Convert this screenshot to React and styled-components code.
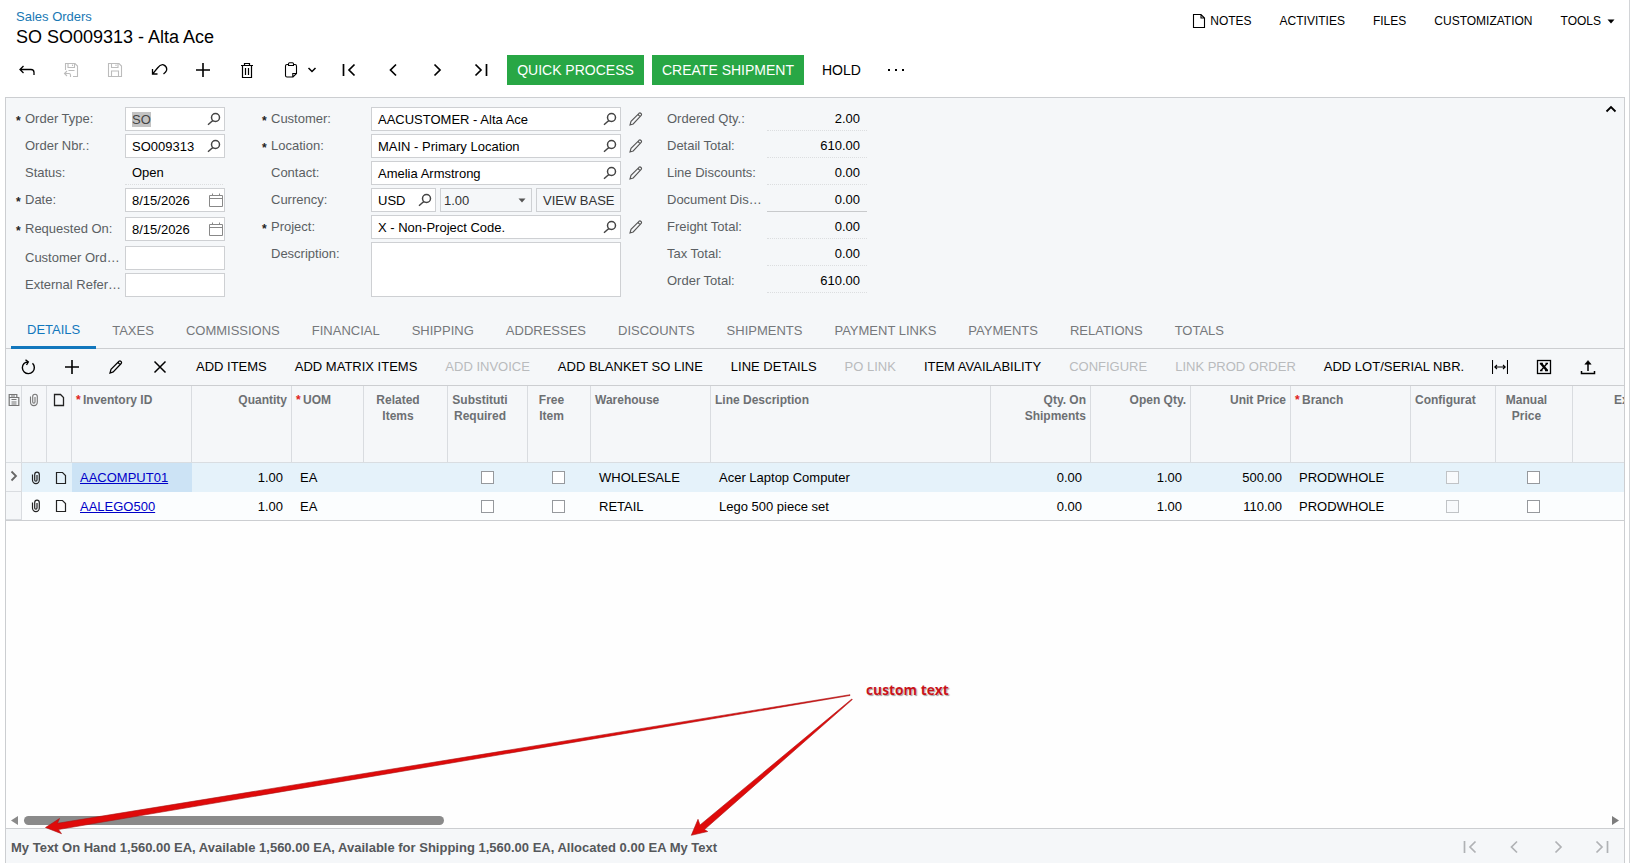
import React from 'react';
import styled, { createGlobalStyle } from 'styled-components';

const GlobalStyle = createGlobalStyle`
    * {
        box-sizing: border-box;
    }
    body {
        margin: 0;
        background: #fff;
        color: #000;
        font-family: "Liberation Sans", Arial, sans-serif;
        font-size: 13px;
        overflow: hidden;
    }
`

const Page = styled.div`
    position: relative;
    width: 1630px;
    height: 863px;
    display: flex;
    flex-direction: column;
    border-right: 1px solid #d2d4d7;
`

const Header = styled.header`
    height: 48px;
    flex: none;
    display: flex;
    justify-content: space-between;
    padding: 8px 14px 0 16px;
`

const Crumb = styled.div`
    color: #1878b4;
    line-height: 16px;
    padding-top: 1px;
`

const Title = styled.div`
    font-size: 18px;
    line-height: 22px;
    margin-top: 1px;
`

const Menu = styled.nav`
    display: flex;
    align-items: center;
    gap: 28px;
    height: 26px;
    font-size: 12px;
`

const MenuItem = styled.span`
    display: flex;
    align-items: center;
    gap: ${props => props.$gap || 0}px;
`

const ActionBar = styled.div`
    height: 49px;
    flex: none;
    display: flex;
    align-items: center;
    padding: 0 0 5px 5px;
`

const IconSlot = styled.span`
    width: ${props => props.$w || 44}px;
    height: 30px;
    flex: none;
    display: flex;
    align-items: center;
    justify-content: center;
    gap: 9px;
`

const CopySlot = styled(IconSlot)`
    width: 58px;
    padding-left: 4px;
`

const GreenButton = styled.button`
    width: ${props => props.$w}px;
    height: 30px;
    border: 0;
    padding: 0;
    margin: 0 4px;
    background: #28a745;
    color: #fff;
    font: 14px "Liberation Sans", Arial, sans-serif;
`

const TextButton = styled.span`
    padding: ${props => props.$size ? '0' : '0 0 2px'};
    margin: 0 14px;
    font-size: ${props => props.$size || 13}px;
    color: ${props => props.$off ? '#b9bbbd' : '#000'};
    white-space: nowrap;
`

const Panel = styled.main`
    width: 1620px;
    margin-left: 5px;
    flex: 1;
    min-height: 0;
    display: flex;
    flex-direction: column;
    border: 1px solid #ccced1;
    border-bottom: 0;
`

const Form = styled.section`
    height: 212px;
    flex: none;
    display: flex;
    padding: 9px 7px 0 9px;
    background: #f5f7f9;
`

const Column = styled.div`
    width: ${props => props.$w}px;
    flex: none;
`

const Row = styled.div`
    height: ${props => props.$h || 24}px;
    margin-bottom: ${props => props.$gap || 3}px;
    display: flex;
    gap: 4px;
`

const Label = styled.label`
    display: flex;
    align-items: center;
    width: 110px;
    height: 23px;
    margin-right: -4px;
    color: #5b5f63;
    white-space: nowrap;
`

const Star = styled.span`
    width: 10px;
    padding: 4px 0 0 1px;
    font-size: 12px;
    font-weight: bold;
    color: #222;
`

const Box = styled.div`
    display: flex;
    align-items: center;
    justify-content: space-between;
    width: ${props => props.$w || 100}px;
    height: ${props => props.$h || 24}px;
    flex: none;
    padding: 0 ${props => props.$end || 3}px 0 ${props => props.$pad || 6}px;
    border: 1px solid #ced0d3;
    background: ${props => props.$flat ? '#f5f7f9' : '#fff'};
    color: ${props => props.$flat ? '#333' : '#000'};
    white-space: nowrap;
`

const Selected = styled.span`
    background: #c3c3c3;
    color: #444;
    line-height: 15px;
`

const Value = styled.div`
    width: ${props => props.$left ? 98 : 100}px;
    height: 24px;
    padding: 0 7px;
    line-height: 24px;
    border-bottom: 1px ${props => props.$solid ? 'solid #c8cacc' : 'dotted #dcdee0'};
    text-align: ${props => props.$left ? 'left' : 'right'};
`

const PencilSlot = styled.span`
    display: flex;
    align-items: center;
    padding-left: 4px;
`

const Collapse = styled.span`
    margin: -2px 0 0 auto;
    line-height: 0;
`

const Tabs = styled.div`
    height: 39px;
    flex: none;
    display: flex;
    padding-left: 5px;
    background: #f5f7f9;
    border-bottom: 1px solid #ccced1;
`

const Tab = styled.span`
    height: 39px;
    padding: ${props => props.$on ? '1px 16px 0' : '2px 16px 0'};
    line-height: ${props => props.$on ? 37 : 38}px;
    color: ${props => props.$on ? '#1277bd' : '#75787b'};
    border-bottom: ${props => props.$on ? '3px solid #1277bd' : '0'};
`

const GridBar = styled.div`
    height: 37px;
    flex: none;
    display: flex;
    align-items: center;
    background: #f5f7f9;
    border-bottom: 1px solid #ccced1;
`

const GridLine = styled.div`
    display: grid;
    grid-template-columns: 16px 25px 25px 120px 100px 72px 84px 80px 63px 120px 280px 100px 100px 100px 120px 85px 77px 51px;
    flex: none;
`

const HeadLine = styled(GridLine)`
    height: 77px;
    background: #f5f7f9;
    border-bottom: 1px solid #d9dde1;
`

const HeadCell = styled.div`
    overflow: hidden;
    padding: 6px ${props => props.$align === 'center' ? 19 : props.$align === 'right' ? 4 : 0}px 0 4px;
    border-right: 1px solid #d9dce0;
    font-size: 12px;
    font-weight: bold;
    line-height: 16px;
    color: #6d7073;
    text-align: ${props => props.$align || 'left'};
    white-space: pre;
`

const ClippedHead = styled(HeadCell)`
    padding: 6px 0 0 41px;
    border-right: 0;
`

const HeadIcon = styled(HeadCell)`
    display: flex;
    align-items: flex-start;
    justify-content: center;
    padding: 7px 0 0;
`

const Required = styled.span`
    display: inline-block;
    width: 7px;
    color: #e02020;
`

const BodyLine = styled(GridLine)`
    height: 29px;
    background: ${props => props.$active ? '#e5f2fa' : '#fbfdfe'};
    border-bottom: ${props => props.$active ? '0' : '1px solid #ccced1'};
`

const Cell = styled.div`
    display: flex;
    align-items: center;
    justify-content: ${props => props.$align || 'flex-start'};
    padding: ${props => props.$align === 'center' ? '0 2px 0 0' : '0 9px 0 8px'};
    background: ${props => props.$picked ? '#cce3f5' : 'transparent'};
    white-space: nowrap;
`

const Marker = styled(Cell)`
    background: #f5f7f9;
    border-right: 1px solid #d9dce0;
    border-bottom: 1px solid #d9dce0;
    padding: 0 0 3px;
`

const IconCell = styled(Cell)`
    padding: 0 0 0 3px;
`

const ItemLink = styled.a`
    color: #0000c8;
    text-decoration: underline;
`

const Check = styled.span`
    width: 13px;
    height: 13px;
    border: 1px solid ${props => props.$off ? '#c0c3c6' : '#96999d'};
    background: ${props => props.$off ? '#f8fafc' : '#fff'};
`

const Blank = styled.div`
    flex: 1;
    background: #fefefe;
`

const ScrollBar = styled.div`
    height: 14px;
    flex: none;
    display: flex;
    align-items: flex-start;
    padding: 2px 5px 0;
    gap: 6px;
    background: #fefefe;
`

const Thumb = styled.div`
    width: 420px;
    height: 9px;
    margin-right: auto;
    border-radius: 5px;
    background: #8a8a8a;
`

const Footer = styled.footer`
    height: 35px;
    flex: none;
    display: flex;
    align-items: center;
    justify-content: space-between;
    padding: 2px 0 0 5px;
    border-top: 1px solid #ccced1;
    background: #f5f7f9;
    font-weight: bold;
    color: #55585b;
`

const Pager = styled.div`
    display: flex;
    color: #b0b2b5;
`

const Arrows = styled.svg`
    position: absolute;
    left: 0;
    top: 0;
    pointer-events: none;
`

const Note = styled.div`
    position: absolute;
    left: 866px;
    top: 680px;
    font: bold 13.8px/20px "Open Sans", sans-serif;
    color: #c8141a;
    white-space: nowrap;
    text-shadow: 0 0 1px #fff, 1px 1px 1px #999;
`

const shapes = {
    back: [16, 16, <path d="M4.500 4 1 7.500l3.500 3.500M1 7.500h11q3 0 3 3V13" />],
    saveClose: [16, 16, <path d="M2.500 8V1.500h9.500l2.500 2.500v10.500h-4.500M5 1.500v4h6.500v-4M9.500 2.500v1.500M5.500 8.500h6M4 9 1.500 11.500 4 14M1.500 11.500H6q1.500 0 1.500 1.500v2" />],
    save: [16, 16, <path d="M1.500 1.500h10.500l2.500 2.500v10.500h-13zM4.500 1.500v4h6.500v-4M9 2.500v1.500M4.500 14.500v-5.500h7v5.500" />],
    undo: [17, 16, <path d="M1.500 7v5h5M1.700 11.800 6.500 6Q9.500 2 12.500 2.800 16.500 4.500 15.500 8.500 15 10 12.500 12" />],
    plus: [16, 16, <path d="M1 8h14M8 1v14" />],
    trash: [16, 16, <path d="M2 3.500h12M5.500 3V1.500h5V3M3.500 4v11.500h9V4M6.500 6v7M9.500 6v7" />],
    copy: [14, 16, <path d="M4 2.500H3Q1.500 2.500 1.500 4v9.500q0 1.500 1.500 1.500h6l3.500-3.500V4Q12.500 2.500 11 2.500h-1M4.500 3.500V2Q4.500.7 5.500.7h3Q9.500.7 9.500 2v1.500zM8.800 15v-3.500h3.700" />],
    down: [10, 6, <path d="M1.500 1l3.500 3.500L8.500 1" />],
    up: [12, 8, <path d="M1.500 6.500 6 2l4.500 4.500" />],
    first: [14, 14, <path d="M1.500 1v12M12.500 1.500 7 7l5.500 5.500" />],
    prev: [14, 14, <path d="M10 1.500 4.500 7l5.500 5.500" />],
    next: [14, 14, <path d="M4.500 1.500 10 7l-5.500 5.500" />],
    last: [14, 14, <path d="M12.500 1v12M1.500 1.500 7 7l-5.500 5.500" />],
    search: [14, 14, <path d="M8.500 1.500a4 4 0 1 1 0 8a4 4 0 1 1 0-8M5.800 8.500 1 12.700" />],
    calendar: [14, 14, <path d="M.5 2.500h13v11H.5zM.5 5.500h13M3.500 .5v2M10.500 .5v2" />],
    pencil: [14, 14, <path d="M1 13l1-3.600L10 1.300q1-.8 2 .2t.2 2L4.200 11.900zM9 2.500l2.300 2.300" />],
    page: [14, 16, <path d="M1.500 1.500h7.500l3.500 3.500v9.500h-11zM9 1.500V5h3.500" />],
    sheet: [12, 14, <path d="M1.500 1.500h6l3 3v8h-9z" />],
    clip: [10, 14, <path d="M1.500 3.500v5.500a3.300 3.500 0 0 0 6.800 0V3.500a2.300 2.300 0 0 0-4.600 0V9a1.100 1.100 0 0 0 2.300 0V4" />],
    refresh: [16, 16, <path d="M12.500 4.300a6 6 0 1 1-8.500.2Q5.500 3 8 3M5.500.7 8.300 3 6.500 6" />],
    close: [14, 14, <path d="M1.500 1.500l11 11M12.500 1.500l-11 11" />],
    fit: [16, 16, <path d="M.5 1v14M15.500 1v14M3 8h10M5 6 2.800 8 5 10M11 6l2.200 2-2.200 2" />],
    excel: [16, 16, <><rect x="1.500" y="1.500" width="13" height="13" /><path d="M5 4.500l6 7" strokeWidth="2.400" /><path d="M11 4.500l-6 7M3.800 4.500h3M9.500 4.500h2.500M4 11.500h2.500M9 11.500h3" /></>],
    upload: [16, 16, <><path d="M8 12V3M1.500 12v2.500h13V12" /><path d="M4.800 5.300 8 1.500l3.200 3.800z" fill="currentColor" strokeWidth=".5" /></>],
    rows: [12, 14, <><path d="M1.200 4V1.500h7.600V4M1.200 4.500h9.600v8H1.200z" /><path d="M3 3h4M3.500 6.500h5M3.500 9h5M3.500 11h5" /></>],
    right: [8, 12, <path d="M1.500 1.500 6 6l-4.500 4.500" />],
}

const Icon = ({ name, color = 'currentColor', weight = 1.3 }) => {
    const [w, h, art] = shapes[name]
    return (
        <svg width={w} height={h} viewBox={`0 0 ${w} ${h}`} fill="none" stroke={color} strokeWidth={weight}>
            {art}
        </svg>
    )
}

const Caret = ({ color = '#000' }) => (
    <svg width="8" height="5" viewBox="0 0 8 5"><path d="M.5 .5h7L4 4.500z" fill={color} /></svg>
)

const Search = () => <Icon name="search" color="#444" weight={1.5} />

const Calendar = () => <Icon name="calendar" color="#888" weight={1} />

const Name = ({ star, children }) => (
    <Label><Star>{star ? '*' : ''}</Star>{children}</Label>
)

const totals = [
    ['Ordered Qty.:', '2.00'],
    ['Detail Total:', '610.00'],
    ['Line Discounts:', '0.00'],
    ['Document Dis…', '0.00'],
    ['Freight Total:', '0.00'],
    ['Tax Total:', '0.00'],
    ['Order Total:', '610.00'],
]

const tabs = ['DETAILS', 'TAXES', 'COMMISSIONS', 'FINANCIAL', 'SHIPPING', 'ADDRESSES', 'DISCOUNTS',
    'SHIPMENTS', 'PAYMENT LINKS', 'PAYMENTS', 'RELATIONS', 'TOTALS']

const gridActions = [
    ['ADD ITEMS'], ['ADD MATRIX ITEMS'], ['ADD INVOICE', true], ['ADD BLANKET SO LINE'], ['LINE DETAILS'],
    ['PO LINK', true], ['ITEM AVAILABILITY'], ['CONFIGURE', true], ['LINK PROD ORDER', true], ['ADD LOT/SERIAL NBR.'],
]

const columns = [
    { text: 'Inventory ID', required: true },
    { text: 'Quantity', align: 'right' },
    { text: 'UOM', required: true },
    { text: 'Related\nItems', align: 'center' },
    { text: 'Substituti\nRequired', align: 'center' },
    { text: 'Free\nItem', align: 'center' },
    { text: 'Warehouse' },
    { text: 'Line Description' },
    { text: 'Qty. On\nShipments', align: 'right' },
    { text: 'Open Qty.', align: 'right' },
    { text: 'Unit Price', align: 'right' },
    { text: 'Branch', required: true },
    { text: 'Configurat' },
    { text: 'Manual\nPrice', align: 'center' },
]

const lines = [
    { id: 'AACOMPUT01', warehouse: 'WHOLESALE', text: 'Acer Laptop Computer', price: '500.00', active: true },
    { id: 'AALEGO500', warehouse: 'RETAIL', text: 'Lego 500 piece set', price: '110.00' },
]

const OrderForm = () => (
    <Form>
        <Column $w={246}>
            <Row><Name star>Order Type:</Name><Box><Selected>SO</Selected><Search /></Box></Row>
            <Row><Name>Order Nbr.:</Name><Box>SO009313<Search /></Box></Row>
            <Row><Name>Status:</Name><Value $left>Open</Value></Row>
            <Row $gap={5}><Name star>Date:</Name><Box $end={1}>8/15/2026<Calendar /></Box></Row>
            <Row $gap={5}><Name star>Requested On:</Name><Box $end={1}>8/15/2026<Calendar /></Box></Row>
            <Row><Name>Customer Ord…</Name><Box /></Row>
            <Row><Name>External Refer…</Name><Box /></Row>
        </Column>
        <Column $w={396}>
            {[['Customer:', 'AACUSTOMER - Alta Ace', true], ['Location:', 'MAIN - Primary Location', true], ['Contact:', 'Amelia Armstrong', false]].map(([label, value, star]) => (
                <Row key={label}>
                    <Name star={star}>{label}</Name>
                    <Box $w={250}>{value}<Search /></Box>
                    <PencilSlot><Icon name="pencil" color="#555" weight={1.1} /></PencilSlot>
                </Row>
            ))}
            <Row>
                <Name>Currency:</Name>
                <Box $w={65}>USD<Search /></Box>
                <Box $w={92} $pad={3} $end={5} $flat>1.00<Caret color="#555" /></Box>
                <Box $w={85} $flat>VIEW BASE</Box>
            </Row>
            <Row>
                <Name star>Project:</Name>
                <Box $w={250}>X - Non-Project Code.<Search /></Box>
                <PencilSlot><Icon name="pencil" color="#555" weight={1.1} /></PencilSlot>
            </Row>
            <Row $h={55}><Name>Description:</Name><Box $w={250} $h={55} /></Row>
        </Column>
        <Column $w={210}>
            {totals.map(([label, value], i) => (
                <Row key={label}><Name>{label}</Name><Value $solid={i === 3}>{value}</Value></Row>
            ))}
        </Column>
        <Collapse><Icon name="up" color="#000" weight={1.8} /></Collapse>
    </Form>
)

const Grid = () => (
    <>
        <HeadLine>
            <HeadIcon><Icon name="rows" color="#777" weight={1.2} /></HeadIcon>
            <HeadIcon><Icon name="clip" color="#777" weight={1.1} /></HeadIcon>
            <HeadIcon><Icon name="sheet" color="#222" /></HeadIcon>
            {columns.map(col => (
                <HeadCell key={col.text} $align={col.align}>{col.required && <Required>*</Required>}{col.text}</HeadCell>
            ))}
            <ClippedHead>Ex</ClippedHead>
        </HeadLine>
        {lines.map(line => (
            <BodyLine key={line.id} $active={line.active}>
                <Marker $align="center">{line.active && <Icon name="right" color="#666" weight={1.8} />}</Marker>
                <IconCell $align="center"><Icon name="clip" color="#222" weight={1.2} /></IconCell>
                <IconCell $align="center"><Icon name="sheet" color="#222" weight={1.2} /></IconCell>
                <Cell $picked={line.active}><ItemLink>{line.id}</ItemLink></Cell>
                <Cell $align="flex-end">1.00</Cell>
                <Cell>EA</Cell>
                <Cell />
                <Cell $align="center"><Check /></Cell>
                <Cell $align="center"><Check /></Cell>
                <Cell>{line.warehouse}</Cell>
                <Cell>{line.text}</Cell>
                <Cell $align="flex-end">0.00</Cell>
                <Cell $align="flex-end">1.00</Cell>
                <Cell $align="flex-end">{line.price}</Cell>
                <Cell>PRODWHOLE</Cell>
                <Cell $align="center"><Check $off /></Cell>
                <Cell $align="center"><Check /></Cell>
                <Cell />
            </BodyLine>
        ))}
    </>
)

export default function App() {
    return (
        <>
            <GlobalStyle />
            <Page>
                <Header>
                    <div>
                        <Crumb>Sales Orders</Crumb>
                        <Title>SO SO009313 - Alta Ace</Title>
                    </div>
                    <Menu>
                        <MenuItem $gap={4}><Icon name="page" weight={1.1} />NOTES</MenuItem>
                        <MenuItem>ACTIVITIES</MenuItem>
                        <MenuItem>FILES</MenuItem>
                        <MenuItem>CUSTOMIZATION</MenuItem>
                        <MenuItem $gap={6}>TOOLS<Caret /></MenuItem>
                    </Menu>
                </Header>
                <ActionBar>
                    <IconSlot><Icon name="back" /></IconSlot>
                    <IconSlot><Icon name="saveClose" color="#bcbcbc" weight={1.1} /></IconSlot>
                    <IconSlot><Icon name="save" color="#bcbcbc" weight={1.1} /></IconSlot>
                    <IconSlot><Icon name="undo" /></IconSlot>
                    <IconSlot><Icon name="plus" weight={1.6} /></IconSlot>
                    <IconSlot><Icon name="trash" weight={1.2} /></IconSlot>
                    <CopySlot><Icon name="copy" weight={1.1} /><Icon name="down" weight={1.5} /></CopySlot>
                    <IconSlot><Icon name="first" weight={1.7} /></IconSlot>
                    <IconSlot><Icon name="prev" weight={1.7} /></IconSlot>
                    <IconSlot><Icon name="next" weight={1.7} /></IconSlot>
                    <IconSlot><Icon name="last" weight={1.7} /></IconSlot>
                    <GreenButton $w={137}>QUICK PROCESS</GreenButton>
                    <GreenButton $w={152}>CREATE SHIPMENT</GreenButton>
                    <TextButton $size={14}>HOLD</TextButton>
                    <IconSlot $w={42}>
                        <svg width="18" height="4" viewBox="0 0 18 4"><path d="M1 1h2v2H1zM8 1h2v2H8zM15 1h2v2h-2z" /></svg>
                    </IconSlot>
                </ActionBar>
                <Panel>
                    <OrderForm />
                    <Tabs>
                        {tabs.map((tab, i) => <Tab key={tab} $on={i === 0}>{tab}</Tab>)}
                    </Tabs>
                    <GridBar>
                        <IconSlot><Icon name="refresh" weight={1.4} /></IconSlot>
                        <IconSlot><Icon name="plus" weight={1.6} /></IconSlot>
                        <IconSlot><Icon name="pencil" weight={1.2} /></IconSlot>
                        <IconSlot><Icon name="close" weight={1.5} /></IconSlot>
                        {gridActions.map(([text, off]) => <TextButton key={text} $off={off}>{text}</TextButton>)}
                        <IconSlot><Icon name="fit" weight={1.1} /></IconSlot>
                        <IconSlot><Icon name="excel" /></IconSlot>
                        <IconSlot><Icon name="upload" weight={1.5} /></IconSlot>
                    </GridBar>
                    <Grid />
                    <Blank />
                    <ScrollBar>
                        <svg width="7" height="9" viewBox="0 0 7 9"><path d="M7 0v9L0 4.500z" fill="#8a8a8a" /></svg>
                        <Thumb />
                        <svg width="7" height="9" viewBox="0 0 7 9"><path d="M0 0v9L7 4.500z" fill="#7d7d7d" /></svg>
                    </ScrollBar>
                    <Footer>
                        <span>My Text On Hand 1,560.00 EA, Available 1,560.00 EA, Available for Shipping 1,560.00 EA, Allocated 0.00 EA My Text</span>
                        <Pager>
                            <IconSlot><Icon name="first" weight={1.7} /></IconSlot>
                            <IconSlot><Icon name="prev" weight={1.7} /></IconSlot>
                            <IconSlot><Icon name="next" weight={1.7} /></IconSlot>
                            <IconSlot><Icon name="last" weight={1.7} /></IconSlot>
                        </Pager>
                    </Footer>
                </Panel>
                <Arrows width="1000" height="863" viewBox="0 0 1000 863" fill="#df0a0a" stroke="#a81414" strokeWidth=".6">
                    <path d="M45.500 827.500 59.500 818.500 57.500 823.300 850 694.700 850 695.500 58.500 829.500 61.500 833.700z" />
                    <path d="M691.300 835.300 698 819.300 700 825 851.800 699 852.300 699.600 704.500 829.500 707.700 831.500z" />
                </Arrows>
                <Note>custom text</Note>
            </Page>
        </>
    );
}
